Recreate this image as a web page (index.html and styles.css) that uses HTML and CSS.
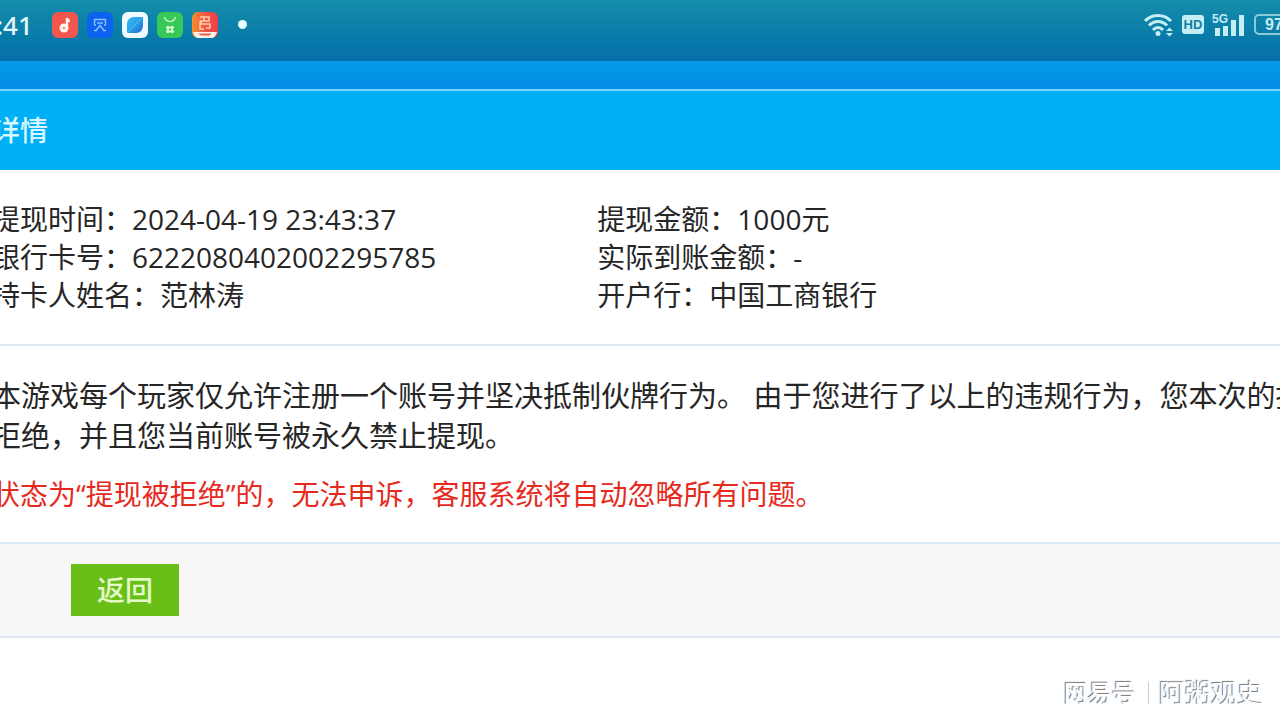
FILE: index.html
```html
<!DOCTYPE html>
<html lang="zh-CN">
<head>
    <meta charset="UTF-8">
    <meta name="viewport" content="width=device-width, initial-scale=1.0">
    <title>详情</title>
    <link rel="stylesheet" href="styles.css">
</head>
<body>
    <div class="status-bar">
        <span class="time">:41</span>
        <div class="apps">
            <svg class="app-icon" viewBox="0 0 26 26">
                <rect width="26" height="26" rx="6" fill="#f2564d"/>
                <circle cx="12" cy="16" r="4.500" fill="#fff3e8"/>
                <path d="M15 16V6c.5 2 1.500 3 3 3" fill="none" stroke="#fff3e8" stroke-width="2.400"/>
                <circle cx="12" cy="16" r="1" fill="#f2564d"/>
            </svg>
            <svg class="app-icon" viewBox="0 0 26 26">
                <rect width="26" height="26" rx="6" fill="#0a62ee"/>
                <path d="M9 13H7.500V7.500h11V13H17M10 11h6M9 18.500l4-5 4 5M7 18.500h3M16 18.500h3" fill="none" stroke="#8dbcff" stroke-width="1.500"/>
            </svg>
            <svg class="app-icon" viewBox="0 0 26 26">
                <defs>
                    <linearGradient id="leaf" x1="0" y1="0" x2="1" y2="1">
                        <stop offset="0" stop-color="#35bdf0"/>
                        <stop offset="0.550" stop-color="#279ee5"/>
                        <stop offset="1" stop-color="#2358d0"/>
                    </linearGradient>
                </defs>
                <rect width="26" height="26" rx="6" fill="#f0fbff"/>
                <path d="M5 20V12c0-4 3-7 7-7h9v8c0 5-3 8-7 8H6z" fill="url(#leaf)"/>
                <path d="M6 20 20 6" stroke="#55c4ee" stroke-width="1"/>
            </svg>
            <svg class="app-icon" viewBox="0 0 26 26">
                <rect width="26" height="26" rx="6" fill="#36c957"/>
                <path d="M7.500 5c1 3.500 3 4.500 5.500 4.500S17.500 8.500 18.500 5" fill="none" stroke="#b9f5bd" stroke-width="1.600"/>
                <path d="M11 14v7M15 14v7M9 15.500h8M9 19.500h8" stroke="#d4fad2" stroke-width="1.800"/>
            </svg>
            <svg class="app-icon" viewBox="0 0 26 26">
                <defs>
                    <linearGradient id="warm" x1="0" y1="0" x2="1" y2="0">
                        <stop offset="0" stop-color="#f4912f"/>
                        <stop offset="0.500" stop-color="#f0553f"/>
                        <stop offset="1" stop-color="#ee3d4c"/>
                    </linearGradient>
                </defs>
                <rect width="26" height="26" rx="6" fill="url(#warm)"/>
                <path d="M8 5h9v4H9v3h9v4h-4M8 9v8h4M12 5v4" fill="none" stroke="#ffd0ac" stroke-width="1.500"/>
                <path d="M1 20h24c-1 4-3 6-6 6H7c-3 0-5-2-6-6z" fill="#fff1eb"/>
                <path d="M6 21.500h14l-3 2H9z" fill="#ee5949"/>
            </svg>
        </div>
        <span class="dot"></span>
        <div class="signals">
            <svg class="wifi" viewBox="0 0 30 24">
                <g fill="none" stroke="#c5edf4" stroke-width="3">
                    <path d="M1 8C8 .5 20 .5 27 8"/>
                    <path d="M5 12.500c5-5.500 13-5.500 18 0"/>
                    <path d="M9 17c3-3.500 7-3.500 10 0"/>
                </g>
                <circle cx="14" cy="20.500" r="2.500" fill="#c5edf4"/>
                <path d="M22 18l3.500-3.500L29 18zM22 20l3.500 3.500L29 20z" fill="#c5edf4"/>
            </svg>
            <span class="hd">HD</span>
            <div class="mobile">
                <svg class="bars" viewBox="0 0 32 24">
                    <path d="M3 15h5v8H3zM11 13h5v10h-5zM19 7h5v16h-5zM27 2h5v21h-5z" fill="#c5edf4"/>
                </svg>
                <span class="network">5G</span>
            </div>
            <span class="battery">97</span>
        </div>
    </div>

    <div class="top-strip"></div>

    <div class="page">
        <h1 class="page-title">详情</h1>

        <div class="info">
            <div>提现时间：2024-04-19 23:43:37</div>
            <div>提现金额：1000元</div>
            <div>银行卡号：6222080402002295785</div>
            <div>实际到账金额：-</div>
            <div>持卡人姓名：范林涛</div>
            <div>开户行：中国工商银行</div>
        </div>

        <div class="notice">
            <p class="reason">本游戏每个玩家仅允许注册一个账号并坚决抵制伙牌行为。 由于您进行了以上的违规行为，您本次的提<br>拒绝，并且您当前账号被永久禁止提现。</p>
            <p class="warning">状态为“提现被拒绝”的，无法申诉，客服系统将自动忽略所有问题。</p>
        </div>

        <div class="actions">
            <button type="button" class="back">返回</button>
        </div>
    </div>

    <div class="watermark">
        <span class="site">网易号</span>
        <span class="author">阿粥观史</span>
    </div>
</body>
</html>
```
FILE: styles.css
```css
* {
    box-sizing: border-box;
}

body {
    margin: 0;
    min-height: 100vh;
    overflow: hidden;
    display: flex;
    flex-direction: column;
    background: #fff;
    color: #262626;
    font-family: "Open Sans", "Noto Sans CJK SC", sans-serif;
    font-size: 28px;
    font-weight: 400;
}

/* phone status bar */
.status-bar {
    display: flex;
    align-items: center;
    height: 61px;
    padding-bottom: 12px;
    background: linear-gradient(#168dab, #087ba8 60%, #076eab);
    color: #e4f8fb;
    overflow: hidden;
}

.time {
    width: 52px;
    margin-left: -4px;
    font-family: "Noto Sans", sans-serif;
    font-size: 26px;
    font-weight: 500;
}

.apps {
    display: flex;
    gap: 9px;
    margin-left: 4px;
}

.app-icon {
    display: block;
    width: 26px;
    height: 26px;
}

.dot {
    width: 9px;
    height: 9px;
    margin-left: 20px;
    border-radius: 50%;
    background: #e8fbfd;
}

.signals {
    display: flex;
    align-items: center;
    gap: 8px;
    margin-left: auto;
    margin-right: -14px;
}

.wifi {
    width: 30px;
    height: 24px;
}

.hd {
    width: 22px;
    height: 19px;
    border-radius: 3px;
    background: #c5edf4;
    color: #147f9f;
    font-family: "Liberation Sans", sans-serif;
    font-size: 13px;
    font-weight: bold;
    line-height: 20px;
    text-align: center;
}

.mobile {
    position: relative;
    height: 24px;
    margin-right: 2px;
}

.bars {
    display: block;
    width: 32px;
    height: 24px;
}

.network {
    position: absolute;
    top: 0;
    left: 0;
    color: #c5edf4;
    font-family: "Liberation Sans", sans-serif;
    font-size: 12px;
    font-weight: bold;
    line-height: 12px;
}

.battery {
    width: 40px;
    height: 21px;
    padding-left: 9px;
    border: 2px solid #8acbd9;
    border-radius: 5px;
    color: #c5edf4;
    font-family: "Liberation Sans", sans-serif;
    font-size: 16px;
    font-weight: bold;
    line-height: 18px;
}

.top-strip {
    height: 30px;
    border-bottom: 2px solid #7bd6fb;
    background: linear-gradient(#059ae9, #048de6);
}

/* the page runs past both screen edges */
.page {
    margin-left: -8px;
    white-space: nowrap;
}

.page-title {
    margin: 0;
    background: #00b0f6;
    color: #d8f6ff;
    font-size: 28px;
    font-weight: 500;
    line-height: 79px;
}

.info {
    display: grid;
    grid-template-columns: 47% 1fr;
    padding: 30px 0;
    border-bottom: 2px solid #dfe7f1;
    line-height: 38px;
}

.notice {
    padding: 30px 0 28px;
    border-bottom: 2px solid #dbe7f2;
    line-height: 40px;
}

.reason {
    margin: 0 0 18px;
    font-size: 29px;
}

.warning {
    margin: 0;
    color: #e62a1e;
}

.actions {
    padding: 20px 79px;
    border-bottom: 2px solid #dde6f3;
    background: #f6f6f6;
}

.back {
    display: block;
    height: 52px;
    padding: 0 26px;
    border: none;
    background: #69be18;
    color: #e2fbc8;
    font-family: inherit;
    font-size: 28px;
    font-weight: 500;
    line-height: 52px;
    cursor: pointer;
}

.watermark {
    display: flex;
    align-items: center;
    justify-content: flex-end;
    margin-top: auto;
    padding: 0 17px 9px 0;
    color: #fff;
    font-size: 26px;
    line-height: 36px;
    text-shadow: -1px -1px 1px #777;
}

.site {
    margin-right: 10px;
    padding-right: 12px;
    border-right: 1px solid #ccc;
    font-size: 24px;
    font-weight: bold;
    line-height: 22px;
}
```
